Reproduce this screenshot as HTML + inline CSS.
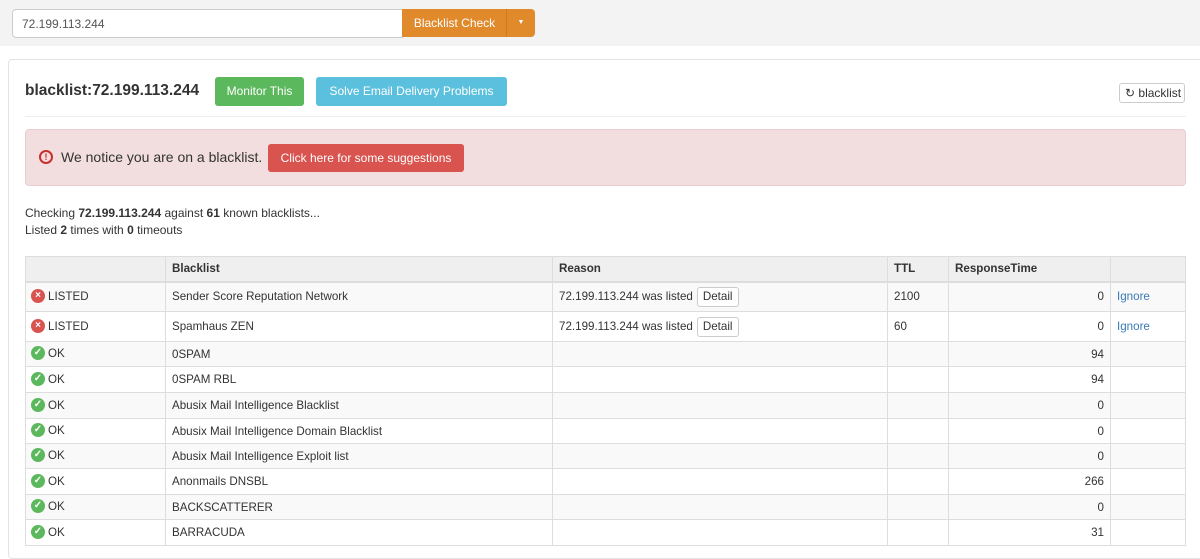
<!DOCTYPE html>
<html><head><meta charset="utf-8"><style>
*{box-sizing:border-box}
body{margin:0;width:1200px;height:545px;overflow:hidden;background:#fff;font-family:"Liberation Sans",Arial,sans-serif;font-size:12px;color:#333}
.top{position:absolute;left:0;top:0;width:1200px;height:46px;background:#f3f3f3}
.inp{position:absolute;left:12px;top:9px;width:391px;height:29px;background:#fff;border:1px solid #ccc;border-radius:4px 0 0 4px;padding:7px 9px;font-size:12px;color:#555}
.ob{position:absolute;top:9px;height:28px;background:#e08a2c;color:#fff;font-size:12px;line-height:28px;text-align:center}
.panel{position:absolute;left:8px;top:59px;width:1200px;height:500px;border:1px solid #e4e4e4;border-radius:4px;background:#fff}
.abs{position:absolute}
.btn{position:absolute;color:#fff;font-size:12px;text-align:center;border-radius:3px}
table{position:absolute;left:25px;top:256px;width:1161px;border-collapse:collapse;font-size:11.6px}
td,th{border:1px solid #ddd;padding:0 6px;text-align:left;white-space:nowrap;vertical-align:middle}
th{background:#efefef;height:25px;font-weight:bold;border-bottom:2px solid #ddd}
tr.o td{background:#f9f9f9}
td:first-child{padding-left:5px}
.ic{display:inline-block;width:14px;height:14px;border-radius:50%;vertical-align:middle;margin-right:3px;color:#fff;font-size:10px;line-height:14px;text-align:center;font-weight:bold;position:relative;top:-1px}
.r{background:#d9534f}.g{background:#5cb85c}
.rt{text-align:right}
a{color:#3a7ab8;text-decoration:none}
.det{display:inline-block;border:1px solid #ccc;border-radius:3px;padding:2px 5px;margin-left:4px;background:#fff;font-size:11.6px;line-height:14px}
</style></head><body>
<div class="top"></div>
<div class="inp">72.199.113.244</div>
<div class="ob" style="left:402px;width:105px;border-radius:0">Blacklist Check</div>
<div class="ob" style="left:506px;width:29px;border-left:1px solid #cf7a1e;border-radius:0 4px 4px 0;font-size:7px">▼</div>
<div class="panel"></div>
<div class="abs" style="left:25px;top:82px;font-size:15.5px;font-weight:bold;color:#333">blacklist:72.199.113.244</div>
<div class="btn" style="left:215px;top:77px;width:89px;height:29px;line-height:29px;background:#5cb85c">Monitor This</div>
<div class="btn" style="left:316px;top:77px;width:191px;height:29px;line-height:29px;background:#5bc0de">Solve Email Delivery Problems</div>
<div class="abs" style="left:1119px;top:83px;width:66px;height:20px;border:1px solid #ccc;border-radius:3px;font-size:12px;line-height:18px;padding-left:5px">↻ blacklist</div>
<div class="abs" style="left:25px;top:116px;width:1161px;border-top:1px solid #eee"></div>
<div class="abs" style="left:25px;top:129px;width:1161px;height:57px;background:#f2dede;border:1px solid #ebccd1;border-radius:4px"></div>
<div class="abs" style="left:39px;top:150px;width:14px;height:14px;border:2px solid #c9302c;border-radius:50%;color:#c9302c;font-size:9px;font-weight:bold;text-align:center;line-height:10px">!</div>
<div class="abs" style="left:61px;top:149px;font-size:14px;color:#333">We notice you are on a blacklist.</div>
<div class="btn" style="left:268px;top:144px;width:196px;height:28px;line-height:28px;background:#d9534f">Click here for some suggestions</div>
<div class="abs" style="left:25px;top:205px;line-height:17px">Checking <b>72.199.113.244</b> against <b>61</b> known blacklists...<br>Listed <b>2</b> times with <b>0</b> timeouts</div>
<table>
<tr><th style="width:140px"></th><th style="width:387px">Blacklist</th><th style="width:335px">Reason</th><th style="width:61px">TTL</th><th style="width:162px">ResponseTime</th><th></th></tr>
<tr class="o" style="height:30px"><td><span class="ic r">×</span>LISTED</td><td>Sender Score Reputation Network</td><td>72.199.113.244 was listed<span class="det">Detail</span></td><td>2100</td><td class="rt">0</td><td><a>Ignore</a></td></tr>
<tr style="height:30px"><td><span class="ic r">×</span>LISTED</td><td>Spamhaus ZEN</td><td>72.199.113.244 was listed<span class="det">Detail</span></td><td>60</td><td class="rt">0</td><td><a>Ignore</a></td></tr>
<tr class="o" style="height:25px"><td><span class="ic g">✓</span>OK</td><td>0SPAM</td><td></td><td></td><td class="rt">94</td><td></td></tr>
<tr style="height:26px"><td><span class="ic g">✓</span>OK</td><td>0SPAM RBL</td><td></td><td></td><td class="rt">94</td><td></td></tr>
<tr class="o" style="height:26px"><td><span class="ic g">✓</span>OK</td><td>Abusix Mail Intelligence Blacklist</td><td></td><td></td><td class="rt">0</td><td></td></tr>
<tr style="height:25px"><td><span class="ic g">✓</span>OK</td><td>Abusix Mail Intelligence Domain Blacklist</td><td></td><td></td><td class="rt">0</td><td></td></tr>
<tr class="o" style="height:25px"><td><span class="ic g">✓</span>OK</td><td>Abusix Mail Intelligence Exploit list</td><td></td><td></td><td class="rt">0</td><td></td></tr>
<tr style="height:26px"><td><span class="ic g">✓</span>OK</td><td>Anonmails DNSBL</td><td></td><td></td><td class="rt">266</td><td></td></tr>
<tr class="o" style="height:25px"><td><span class="ic g">✓</span>OK</td><td>BACKSCATTERER</td><td></td><td></td><td class="rt">0</td><td></td></tr>
<tr style="height:26px"><td><span class="ic g">✓</span>OK</td><td>BARRACUDA</td><td></td><td></td><td class="rt">31</td><td></td></tr>
</table>
</body></html>
